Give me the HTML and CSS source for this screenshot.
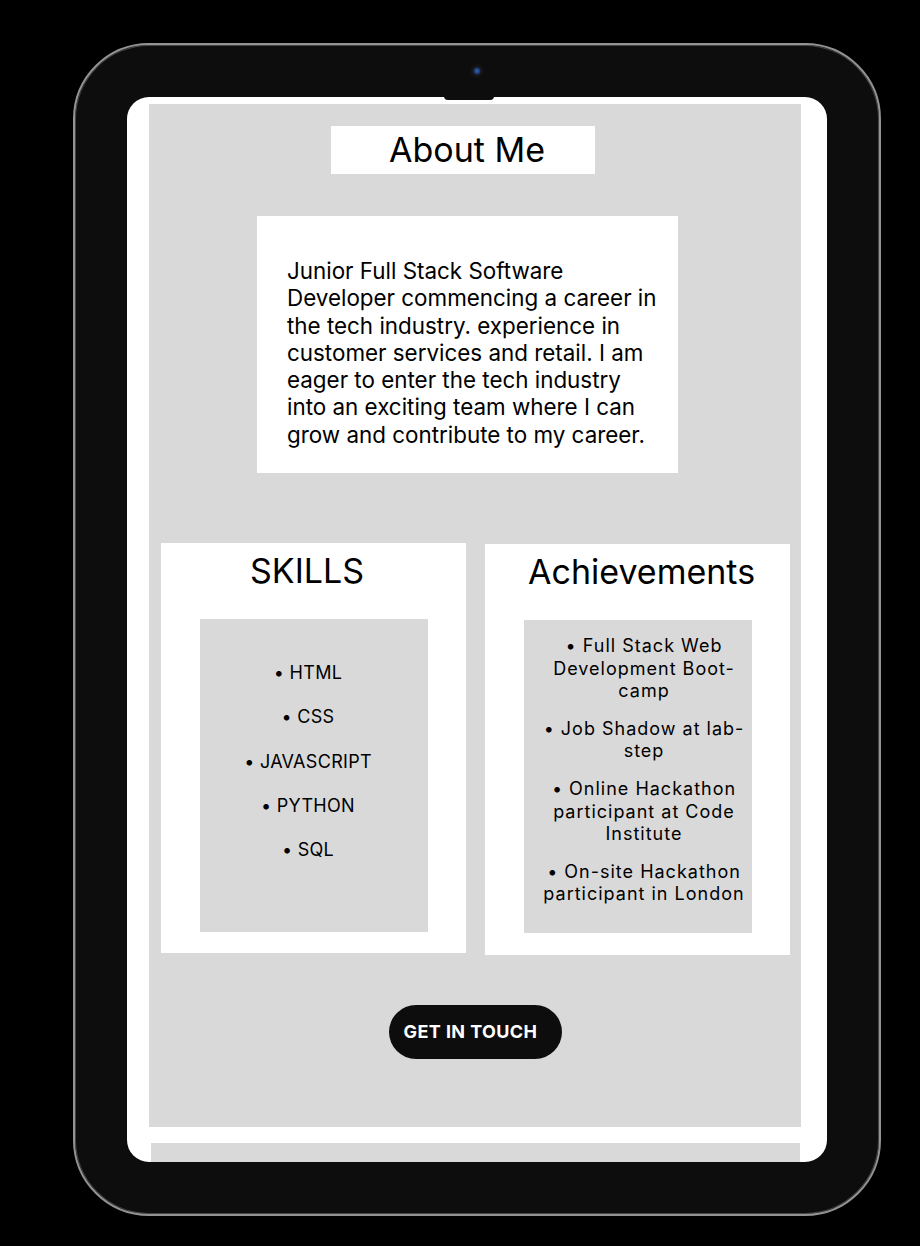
FILE: index.html
```html
<!DOCTYPE html>
<html lang="en">
<head>
<meta charset="utf-8">
<title>About Me</title>
<link rel="stylesheet" href="styles.css">
</head>
<body>
<div class="device">
  <div class="camera"></div>
  <div class="notch"></div>
  <div class="screen">
    <main class="panel">
      <h1 class="title">About Me</h1>
      <section class="bio">
        <p>Junior Full Stack Software Developer commencing a career in the tech industry. experience in customer services and retail. I am eager to enter the tech industry into an exciting team where I can grow and contribute to my career.</p>
      </section>
      <div class="cards">
        <section class="card card-skills">
          <h2 class="card-title">SKILLS</h2>
          <ul class="list skills">
            <li>• HTML</li>
            <li>• CSS</li>
            <li>• JAVASCRIPT</li>
            <li>• PYTHON</li>
            <li>• SQL</li>
          </ul>
        </section>
        <section class="card card-ach">
          <h2 class="card-title">Achievements</h2>
          <ul class="list achievements">
            <li>• Full Stack Web Development Boot-camp</li>
            <li>• Job Shadow at lab-step</li>
            <li>• Online Hackathon participant at Code Institute</li>
            <li>• On-site Hackathon participant in London</li>
          </ul>
        </section>
      </div>
      <div class="cta-row">
        <a class="cta" href="#">GET IN TOUCH</a>
      </div>
    </main>
    <div class="next-panel"></div>
  </div>
</div>
</body>
</html>
```

FILE: styles.css
```css
* { box-sizing: border-box; }

html, body {
  margin: 0;
  padding: 0;
  background: #000;
}

body {
  font-family: Inter, "Noto Sans", sans-serif;
  color: #000;
  padding: 43px 0 0 73px;
}

.device {
  position: relative;
  width: 808px;
  height: 1173px;
  background: #0d0d0d;
  border: 2px solid #939393;
  border-radius: 76px;
  padding: 52px;
  box-shadow: inset 0 0 0 1px #444;
}

.camera {
  position: absolute;
  left: 395px;
  top: 19px;
  width: 14px;
  height: 14px;
  border-radius: 50%;
  background: radial-gradient(circle, #3563b8 0, #1c3566 3px, #161616 4px, #101010 7px);
}

.notch {
  position: absolute;
  left: 369px;
  top: 51px;
  width: 50px;
  height: 4px;
  background: #0d0d0d;
  border-radius: 0 0 8px 8px;
  z-index: 2;
}

.screen {
  width: 700px;
  height: 1065px;
  background: #fff;
  border-radius: 22px;
  overflow: hidden;
  padding: 7px 0 0 22px;
}

.panel {
  width: 652px;
  height: 1023px;
  background: #d9d9d9;
  padding-top: 22px;
  display: flex;
  flex-direction: column;
}

.title {
  margin: 0 0 0 182px;
  width: 264px;
  height: 48px;
  background: #fff;
  padding-left: 8px;
  font-size: 34px;
  font-weight: 400;
  line-height: 48px;
  text-align: center;
}

.bio {
  margin: 42px 0 0 108px;
  width: 421px;
  height: 257px;
  background: #fff;
  padding: 41px 17px 0 30px;
}

.bio p {
  margin: 0;
  font-size: 22.4px;
  line-height: 27.3px;
}

.cards {
  margin: 70px 0 0 12px;
  display: flex;
  gap: 19px;
  align-items: flex-start;
}

.card {
  width: 305px;
  height: 410px;
  background: #fff;
  padding: 7px 38px 0 39px;
  display: flex;
  flex-direction: column;
}

.card-ach {
  margin-top: 1px;
  height: 411px;
}

.card-title {
  margin: 0;
  font-size: 34px;
  font-weight: 400;
  line-height: 41px;
  text-align: center;
}

.card-skills .card-title {
  padding-right: 14px;
}

.card-ach .card-title {
  padding-left: 4px;
}

.list {
  list-style: none;
  margin: 28px 0 0;
  padding: 0;
  background: #d9d9d9;
  height: 313px;
  text-align: center;
  font-size: 18px;
}

.skills {
  padding: 43px 12px 0 0;
  display: flex;
  flex-direction: column;
  gap: 22.3px;
  letter-spacing: 0.3px;
}

.skills li {
  line-height: 22px;
}

.achievements {
  padding: 15px 0 0 12px;
  display: flex;
  flex-direction: column;
  gap: 15px;
  letter-spacing: 1px;
}

.achievements li {
  line-height: 22.6px;
}

.cta-row {
  margin-top: 50px;
  display: flex;
  justify-content: center;
}

.cta {
  display: block;
  width: 173px;
  height: 54px;
  border-radius: 27px;
  background: #0d0d0d;
  color: #fff;
  text-decoration: none;
  font-weight: 700;
  font-size: 18px;
  letter-spacing: 0.4px;
  line-height: 54px;
  text-align: center;
  padding-right: 10px;
  margin-left: 1px;
}

.next-panel {
  margin: 16px 0 0 2px;
  width: 649px;
  height: 40px;
  background: #d9d9d9;
}
```
